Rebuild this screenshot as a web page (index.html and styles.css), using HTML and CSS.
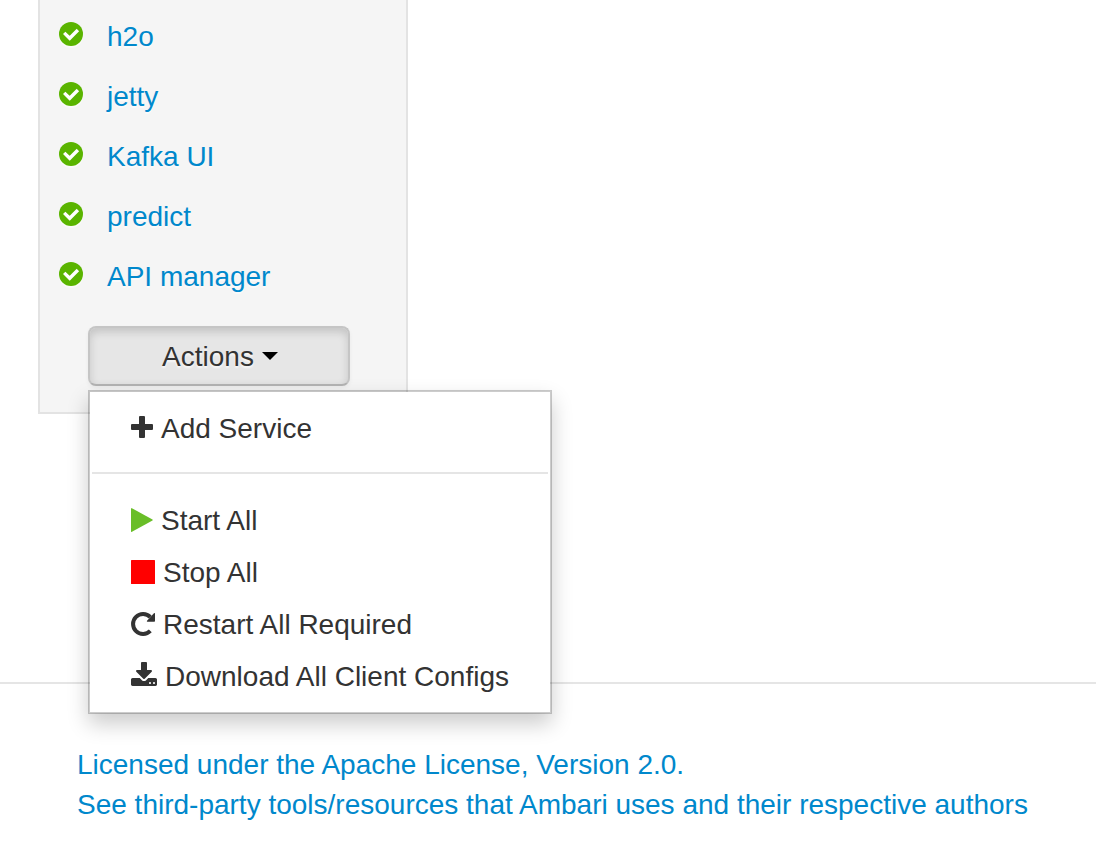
FILE: index.html
```html
<!DOCTYPE html>
<html lang="en">
<head>
<meta charset="utf-8">
<title>Ambari</title>
<meta name="viewport" content="width=device-width, initial-scale=1">
<link rel="stylesheet" href="styles.css">
</head>
<body>
<svg class="sprite" aria-hidden="true">
  <symbol id="check-circle" viewBox="0 0 24 24"><circle cx="12" cy="12" r="12" fill="#5ab400"/><path d="M5.200 10.900L10.700 16.300L18.900 8" fill="none" stroke="#fff" stroke-width="3.400"/></symbol>
</svg>
<main class="content">
  <nav class="well" aria-label="Services">
    <ul class="services">
      <li><a class="service" href="#h2o"><svg class="status" aria-hidden="true"><use href="#check-circle"/></svg>h2o</a></li>
      <li><a class="service" href="#jetty"><svg class="status" aria-hidden="true"><use href="#check-circle"/></svg>jetty</a></li>
      <li><a class="service" href="#kafka-ui"><svg class="status" aria-hidden="true"><use href="#check-circle"/></svg>Kafka UI</a></li>
      <li><a class="service" href="#predict"><svg class="status" aria-hidden="true"><use href="#check-circle"/></svg>predict</a></li>
      <li><a class="service" href="#api-manager"><svg class="status" aria-hidden="true"><use href="#check-circle"/></svg>API manager</a></li>
    </ul>
    <div class="actions">
      <button class="btn" type="button" aria-haspopup="true" aria-expanded="true">Actions<span class="caret"></span></button>
      <ul class="menu">
        <li><a class="menu-item" href="#add"><svg class="icon icon-plus" viewBox="0 0 22 22" aria-hidden="true"><path d="M9 0h4q1 0 1 1v7h7q1 0 1 1v4q0 1-1 1h-7v7q0 1-1 1h-4q-1 0-1-1v-7h-7q-1 0-1-1v-4q0-1 1-1h7v-7q0-1 1-1z"/></svg>Add Service</a></li>
        <li class="divider" role="separator"></li>
        <li><a class="menu-item" href="#start"><svg class="icon icon-play" viewBox="0 0 22 24" aria-hidden="true"><path d="M0 0.500Q0 0 0.500 0.100L21.500 11.500Q22 12 21.500 12.500L0.500 23.900Q0 24 0 23.500z"/></svg>Start All</a></li>
        <li><a class="menu-item" href="#stop"><svg class="icon icon-stop" viewBox="0 0 24 24" aria-hidden="true"><rect width="24" height="24" rx="0.500"/></svg>Stop All</a></li>
        <li><a class="menu-item" href="#restart"><svg class="icon" viewBox="0 0 24 24" aria-hidden="true"><path d="M19.300 18.900A10 10 0 1 1 19.300 5.100" fill="none" stroke="#333" stroke-width="4"/><path d="M23.200 1.100Q24 0.800 24 1.600V9Q24 9.800 23.200 9.800H16.400Q15.400 9.600 16 8.700z"/></svg>Restart All Required</a></li>
        <li><a class="menu-item" href="#download"><svg class="icon icon-download" viewBox="64 0 1664 1536" aria-hidden="true"><path d="M1344 1344q0-26-19-45t-45-19-45 19-19 45 19 45 45 19 45-19 19-45zm256 0q0-26-19-45t-45-19-45 19-19 45 19 45 45 19 45-19 19-45zm128-224v320q0 40-28 68t-68 28h-1472q-40 0-68-28t-28-68v-320q0-40 28-68t68-28h465l135 136q58 56 136 56t136-56l136-136h464q40 0 68 28t28 68zm-325-569q17 41-14 70l-448 448q-18 19-45 19t-45-19l-448-448q-31-29-14-70 17-39 59-39h256v-448q0-26 19-45t45-19h256q26 0 45 19t19 45v448h256q42 0 59 39z"/></svg>Download All Client Configs</a></li>
      </ul>
    </div>
  </nav>
</main>
<footer class="footer">
  <a href="#license">Licensed under the Apache License, Version 2.0.</a>
  <a href="#third-party">See third-party tools/resources that Ambari uses and their respective authors</a>
</footer>
</body>
</html>
```
FILE: styles.css
```css
* {
  box-sizing: border-box;
}

body {
  display: flex;
  flex-direction: column;
  min-height: 100vh;
  margin: 0;
  background: #fff;
  color: #333;
  font: 28px/40px "Liberation Sans", Arial, sans-serif;
}

a {
  color: #08c;
  text-decoration: none;
}

ul {
  margin: 0;
  padding: 0;
  list-style: none;
}

.sprite {
  position: absolute;
  width: 0;
  height: 0;
}

.content {
  padding: 0 38px;
}

.well {
  width: 370px;
  padding: 6px 0 26px;
  border: 2px solid #e3e3e3;
  border-top: 0;
  background: #f5f5f5;
}

.service {
  display: flex;
  align-items: center;
  gap: 24px;
  padding: 11px 19px 9px;
  text-shadow: 0 2px 0 rgba(255, 255, 255, 0.5);
}

.status {
  width: 24px;
  height: 24px;
  margin-bottom: 6px;
  filter: drop-shadow(0 2px 0 rgba(255, 255, 255, 0.5));
}

.actions {
  position: relative;
  width: 262px;
  margin: 20px 0 0 48px;
}

.btn {
  display: flex;
  align-items: center;
  justify-content: center;
  gap: 8px;
  width: 100%;
  padding: 9px 23px 7px 25px;
  border: 2px solid;
  border-color: #c5c5c5 #c5c5c5 #b3b3b3;
  border-radius: 8px;
  background: #e6e6e6;
  box-shadow: inset 0 4px 8px rgba(0, 0, 0, 0.15), 0 2px 4px rgba(0, 0, 0, 0.05);
  color: #333;
  font: inherit;
  text-shadow: 0 2px 2px rgba(255, 255, 255, 0.75);
}

.caret {
  margin-bottom: 2px;
  border: 8px solid transparent;
  border-top-color: #000;
  border-bottom: 0;
}

.menu {
  position: absolute;
  top: 64px;
  left: 0;
  width: 464px;
  padding: 10px 0;
  border: 2px solid rgba(0, 0, 0, 0.2);
  background: #fff;
  background-clip: padding-box;
  box-shadow: 0 10px 20px rgba(0, 0, 0, 0.2);
}

.menu-item {
  display: flex;
  align-items: center;
  gap: 8px;
  padding: 7px 41px 5px;
  color: #333;
  white-space: nowrap;
}

.divider {
  height: 2px;
  margin: 18px 2px 20px;
  background: #e5e5e5;
}

.icon {
  flex: none;
  width: 24px;
  height: 24px;
  margin-bottom: 2px;
  fill: #333;
}

.icon-plus {
  width: 22px;
  height: 22px;
  margin-bottom: 4px;
}

.icon-play {
  width: 22px;
  fill: #69be28;
}

.icon-stop {
  fill: #f00;
}

.icon-download {
  width: 26px;
  margin-bottom: 6px;
}

.footer {
  display: flex;
  flex-direction: column;
  align-items: flex-start;
  margin-top: auto;
  padding: 61px 0 23px 77px;
  border-top: 2px solid #e5e5e5;
}
```
